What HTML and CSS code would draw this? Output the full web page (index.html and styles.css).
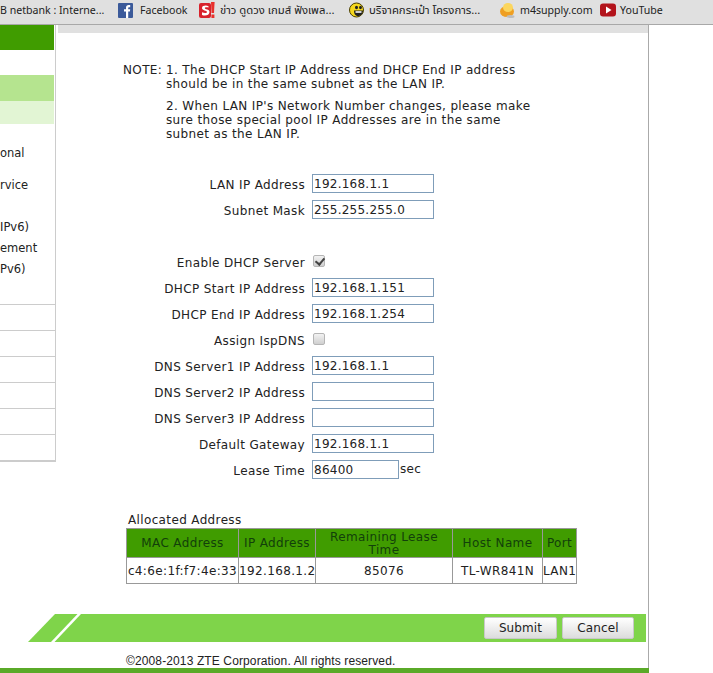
FILE: index.html
```html
<!DOCTYPE html>
<html lang="en">
<head>
<meta charset="utf-8">
<title>ZTE DHCP Server</title>
<link rel="stylesheet" href="styles.css">
</head>
<body>
<div class="bookmarks">
  <span class="bm bm-first">B netbank : Interne...</span>
  <span class="bm bm-fb"><svg class="ico" viewBox="0 0 15 15"><rect width="15" height="15" rx="1" fill="#3b5a9a"/><path d="M8 15V8.6H6V6.3h2V4.7C8 2.8 9.100 2 10.700 2h1.500v2.200h-1c-.8 0-1 .4-1 1v1.100h2l-.3 2.300h-1.700V15z" fill="#fff"/></svg>Facebook</span>
  <span class="bm bm-sanook"><svg class="ico ico-s" viewBox="0 0 16 17"><rect x="0" y="1" width="12" height="15" rx="2" fill="#d8222c"/><path d="M9.500 4.200C7 3 3 3.600 3 6c0 3 5 2 5 4 0 1.400-3 1.300-5 .3v2.600c3 1.100 7.500.6 7.500-3C10.500 7 5.800 7.700 5.800 6c0-1.100 2-1 3.700-.4z" fill="#fff"/><path d="M12 0h3.600l-.6 11h-2.500z" fill="#e8302c"/><rect x="12.400" y="12.500" width="3" height="3.500" fill="#e8302c"/></svg><span class="thai">ข่าว ดูดวง เกมส์ ฟังเพล...</span></span>
  <span class="bm bm-smile"><svg class="ico ico-smile" viewBox="0 0 16 16"><circle cx="7.500" cy="8" r="7" fill="#f6d81e" stroke="#4a3f00" stroke-width="1"/><ellipse cx="7.500" cy="5.500" rx="1.500" ry="1.800" fill="#222"/><ellipse cx="11.500" cy="5.500" rx="1.400" ry="1.800" fill="#222"/><path d="M5 8.500h9c0 3-2 5.500-5 5.500s-4-2.500-4-5.500z" fill="#222"/><path d="M6.500 9.200h6v1.600h-6z" fill="#fff"/></svg><span class="thai">บริจาคกระเป๋า โครงการ...</span></span>
  <span class="bm bm-m4"><svg class="ico ico-m4" viewBox="0 0 15 15"><ellipse cx="7" cy="8.500" rx="7" ry="5.500" fill="#ef9f22"/><ellipse cx="8" cy="4.500" rx="5" ry="4.500" fill="#fbd65e"/><ellipse cx="10.500" cy="13.500" rx="4" ry="1.500" fill="#bdbdbd"/></svg>m4supply.com</span>
  <span class="bm bm-yt"><svg class="ico ico-yt" viewBox="0 0 16 14"><rect width="16" height="13" y=".5" rx="3" fill="#b3141c"/><path d="M6 3.500l5.500 3.500L6 10.500z" fill="#fff"/></svg>YouTube</span>
</div>
<div class="page">
  <aside class="sidebar">
    <div class="side-head"></div>
    <div class="side-sel"></div>
    <div class="side-sub"></div>
    <div class="side-items">
      <div class="side-text side-t1">onal</div>
      <div class="side-text side-t2">rvice</div>
      <div class="side-text side-t3">IPv6)</div>
      <div class="side-text side-t4">ement</div>
      <div class="side-text side-t5">Pv6)</div>
    </div>
    <div class="side-row"></div>
    <div class="side-row"></div>
    <div class="side-row"></div>
    <div class="side-row"></div>
    <div class="side-row"></div>
    <div class="side-row side-last"></div>
  </aside>
  <main class="main">
    <div class="top-strip"></div>
    <div class="note">
      <div class="note-key">NOTE:</div>
      <div class="note-body">
        <p>1. The DHCP Start IP Address and DHCP End IP address<br>should be in the same subnet as the LAN IP.</p>
        <p>2. When LAN IP's Network Number changes, please make<br>sure those special pool IP Addresses are in the same<br>subnet as the LAN IP.</p>
      </div>
    </div>
    <div class="form">
      <label class="lbl">LAN IP Address</label><div class="fld"><input class="txt" value="192.168.1.1"></div>
      <label class="lbl">Subnet Mask</label><div class="fld"><input class="txt" value="255.255.255.0"></div>
      <div class="gap"></div>
      <label class="lbl">Enable DHCP Server</label><div class="fld"><input class="chk" type="checkbox" checked></div>
      <label class="lbl">DHCP Start IP Address</label><div class="fld"><input class="txt" value="192.168.1.151"></div>
      <label class="lbl">DHCP End IP Address</label><div class="fld"><input class="txt" value="192.168.1.254"></div>
      <label class="lbl">Assign IspDNS</label><div class="fld"><input class="chk" type="checkbox"></div>
      <label class="lbl">DNS Server1 IP Address</label><div class="fld"><input class="txt" value="192.168.1.1"></div>
      <label class="lbl">DNS Server2 IP Address</label><div class="fld"><input class="txt" value=""></div>
      <label class="lbl">DNS Server3 IP Address</label><div class="fld"><input class="txt" value=""></div>
      <label class="lbl">Default Gateway</label><div class="fld"><input class="txt" value="192.168.1.1"></div>
      <label class="lbl">Lease Time</label><div class="fld"><input class="txt txt-short" value="86400"><span class="unit">sec</span></div>
    </div>
    <div class="alloc">
      <div class="alloc-title">Allocated Address</div>
      <table class="tbl">
        <colgroup><col class="c1"><col class="c2"><col class="c3"><col class="c4"><col class="c5"></colgroup>
        <thead><tr><th>MAC Address</th><th>IP Address</th><th>Remaining Lease Time</th><th>Host Name</th><th>Port</th></tr></thead>
        <tbody><tr><td>c4:6e:1f:f7:4e:33</td><td>192.168.1.2</td><td>85076</td><td>TL-WR841N</td><td>LAN1</td></tr></tbody>
      </table>
    </div>
    <div class="actions">
      <svg class="slant" viewBox="0 0 54 28" preserveAspectRatio="none"><path d="M27 0H54V28H0z" fill="#7fd44a"/><path d="M49.500 0h3.500L26.500 28H23z" fill="#fff"/></svg>
      <div class="action-bar">
        <button class="btn btn-submit" type="button">Submit</button>
        <button class="btn btn-cancel" type="button">Cancel</button>
      </div>
    </div>
    <div class="copy">©2008-2013 ZTE Corporation. All rights reserved.</div>
  </main>
</div>
<div class="base"></div>
</body>
</html>
```
FILE: styles.css
```css
* { box-sizing: border-box; }
html, body { margin: 0; padding: 0; height: 673px; overflow: hidden; background: #fff; }
body { font-family: "DejaVu Sans", Verdana, sans-serif; font-size: 12px; color: #222; letter-spacing: .36px; }

.bookmarks {
  height: 25px;
  display: flex;
  align-items: center;
  background: #e0e0e0;
  border-bottom: 1px solid #a8a8a8;
  font-family: "Noto Sans", "Noto Sans Thai", "DejaVu Sans", sans-serif;
  font-size: 10.6px;
  letter-spacing: 0;
  color: #222;
  white-space: nowrap;
  overflow: hidden;
  padding-bottom: 4px;
}
.bm { display: flex; align-items: center; }
.thai { font-size: 11.300px; }
.ico { width: 15px; height: 15px; margin-right: 7px; flex: none; }
.ico-s { width: 16px; height: 17px; margin-right: 5px; }
.ico-smile { width: 16px; height: 16px; margin-right: 4px; }
.ico-m4 { margin-right: 5px; }
.ico-yt { width: 16px; height: 14px; margin-right: 4px; }
.bm-first { width: 118px; }
.bm-fb { width: 81px; }
.bm-sanook { width: 150px; }
.bm-smile { width: 151px; }
.bm-m4 { width: 100px; }

.page { width: 649px; height: 643px; display: flex; border-right: 1px solid #aaa; }

.sidebar { width: 56px; height: 437px; flex: none; border-right: 1px solid #ccc; border-bottom: 2px solid #ccc; }
.side-head { height: 25px; background: #409c00; margin-right: 1px; }
.side-sel { height: 26px; margin-top: 25px; background: #b5e48f; margin-right: 1px; }
.side-sub { height: 23px; background: #e2f5d4; margin-right: 1px; }
.side-items { height: 180px; overflow: hidden; }
.side-text { font-size: 11.5px; letter-spacing: 0; line-height: 14px; white-space: nowrap; }
.side-t1 { margin-top: 22px; }
.side-t2 { margin-top: 18px; }
.side-t3 { margin-top: 28px; }
.side-t4 { margin-top: 7px; }
.side-t5 { margin-top: 7px; }
.side-row { height: 26px; border-top: 1px solid #ccc; }

.main { flex: 1; margin-left: 2px; min-width: 0; }
.top-strip { height: 8px; background: #e0e0e0; }

.note { display: flex; margin: 30px 0 0 65px; line-height: 14px; white-space: nowrap; }
.note-key { width: 43px; flex: none; }
.note-body p { margin: 0 0 8px; }

.form { display: grid; grid-template-columns: 247px 1fr; column-gap: 7px; grid-auto-rows: 26px; margin-top: 25px; }
.gap { grid-column: 1 / -1; }
.lbl { text-align: right; line-height: 22px; }
.fld { display: flex; align-items: flex-start; }
.txt {
  width: 122px; height: 19px; padding: 0 1px;
  border: 1px solid #7f9db9;
  font: 12px "DejaVu Sans", Verdana, sans-serif;
  letter-spacing: .25px;
  color: #222; background: #fff; outline: none; border-radius: 0;
}
.txt-short { width: 87px; }
.unit { margin-left: 1px; line-height: 18px; }
.chk {
  appearance: none; -webkit-appearance: none;
  width: 12px; height: 12px; margin: 3px 0 0 1px;
  border: 1px solid #b5b5b5; border-radius: 2px;
  background: linear-gradient(#f2f2f2, #cfcfcf);
  position: relative;
}
.chk:checked::after {
  content: ""; position: absolute; left: 3px; top: 0;
  width: 4px; height: 7px;
  border: solid #444; border-width: 0 2px 2px 0;
  transform: rotate(40deg);
}

.alloc { margin: 27px 0 0 68px; }
.alloc-title { line-height: 14px; margin-left: 2px; }
.tbl { border-collapse: collapse; table-layout: fixed; width: 450px; margin-top: 1px; }
.c1 { width: 112px; }
.c2 { width: 77px; }
.c3 { width: 137px; }
.c4 { width: 90px; }
.c5 { width: 34px; }
.tbl th, .tbl td { border: 1px solid #999; padding: 1px 0 0; text-align: center; line-height: 13px; white-space: nowrap; }
.tbl th { height: 29px; background: #409c00; color: #12400a; font-weight: normal; white-space: normal; }
.tbl td { height: 26px; background: #fff; }

.actions { display: flex; height: 28px; margin: 30px 0 0 -30px; }
.slant { width: 54px; height: 28px; flex: none; }
.action-bar { flex: 1; margin-right: 2px; background: #7fd44a; display: flex; justify-content: flex-end; align-items: flex-start; gap: 5px; padding: 3px 12px 0 0; }
.btn {
  height: 22px; padding: 0;
  font: 12px "DejaVu Sans", Verdana, sans-serif; letter-spacing: .1px; color: #222;
  background: linear-gradient(#fff, #dcdcdc);
  border: 1px solid #c8c8c8; border-radius: 2px;
}
.btn-submit { width: 73px; }
.btn-cancel { width: 72px; }
.copy { margin: 11px 0 0 68px; font-family: "Liberation Sans", Arial, sans-serif; font-size: 12px; letter-spacing: .12px; line-height: 16px; }

.base { width: 649px; height: 5px; background: #5aaa28; }
```
